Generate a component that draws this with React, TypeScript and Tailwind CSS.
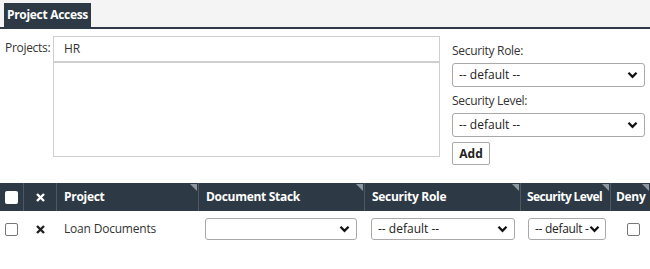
import React from "react";

const Chevron = () => (
  <svg width="11" height="8" viewBox="0 0 11 8" className="shrink-0">
    <path d="M1.5 1.8 L5.5 5.8 L9.5 1.8" fill="none" stroke="#111" strokeWidth="2.3" />
  </svg>
);

const XIcon = () => (
  <svg width="9" height="9" viewBox="0 0 9 9">
    <path d="M1 1 L8 8 M8 1 L1 8" stroke="currentColor" strokeWidth="2.4" />
  </svg>
);

const Sel = ({ text, className }: { text: string; className: string }) => (
  <div
    className={`flex items-center justify-between border border-[#a9a9a9] rounded-[3px] bg-white pl-[6px] pr-[6px] text-[12px] text-[#222] whitespace-nowrap ${className}`}
  >
    <span>{text}</span>
    <Chevron />
  </div>
);

const Tri = () => (
  <div className="absolute top-[1px] right-[1px] w-0 h-0 border-l-[7px] border-l-transparent border-t-[7px] border-t-[#8d969e]" />
);

const Th = ({ w, children, tri = true, last = false }: { w: string; children?: React.ReactNode; tri?: boolean; last?: boolean }) => (
  <div className={`relative h-full flex items-center ${w} ${last ? "" : "border-r border-[#4d5862]"}`}>
    {children}
    {tri && <Tri />}
  </div>
);

export default function App() {
  return (
    <div className="w-[650px] h-[269px] bg-white text-[#333] overflow-hidden" style={{ fontFamily: '"Open Sans", "Noto Sans", sans-serif' }}>
      <div className="h-[27px] bg-[#f4f4f4] flex items-end pl-[4px]">
        <div className="h-[24px] w-[87px] bg-[#2d3a45] text-white text-[12px] font-bold tracking-[-0.3px] flex items-center justify-center">
          Project Access
        </div>
      </div>
      <div className="h-[2px] bg-[#2d3a45]" />
      <div className="flex pt-[7px]">
        <div className="w-[53px] pl-[5px] pt-[3px] text-[12px] tracking-[-0.3px]">Projects:</div>
        <div className="w-[387px] h-[121px] border border-[#cfcfcf]">
          <div className="h-[26px] border-b-2 border-[#cfcfcf] pl-[10px] flex items-center text-[12px]">HR</div>
        </div>
        <div className="ml-[12px] w-[193px] flex flex-col pt-[5px]">
          <div className="text-[12px] tracking-[-0.3px] h-[20px] leading-[20px] mb-[2px]">Security Role:</div>
          <Sel text="-- default --" className="h-[24px]" />
          <div className="text-[12px] tracking-[-0.3px] h-[20px] leading-[20px] mt-[4px] mb-[2px]">Security Level:</div>
          <Sel text="-- default --" className="h-[24px]" />
          <div className="mt-[5px] w-[38px] h-[23px] border border-[#a9a9a9] rounded-[2px] flex items-center justify-center text-[12px] font-bold text-[#222]">
            Add
          </div>
        </div>
      </div>
      <div className="mt-[18px] h-[28px] bg-[#2d3a45] text-white text-[12px] font-bold tracking-[-0.3px] flex">
        <Th w="w-[24px]" tri={false}>
          <div className="ml-[5px] w-[13px] h-[13px] bg-white rounded-[2px]" />
        </Th>
        <Th w="w-[33px]" tri={false}>
          <div className="ml-[12px] text-white"><XIcon /></div>
        </Th>
        <Th w="w-[142px] pl-[7px]">Project</Th>
        <Th w="w-[166px] pl-[7px]">Document Stack</Th>
        <Th w="w-[156px] pl-[7px]">Security Role</Th>
        <Th w="w-[90px] pl-[6px] tracking-[-0.6px]">Security Level</Th>
        <Th w="flex-1 pl-[5px]" last>Deny</Th>
      </div>
      <div className="h-[36px] flex items-center text-[12px]">
        <div className="w-[24px] flex items-center">
          <div className="ml-[5px] w-[13px] h-[13px] border border-[#777] rounded-[2px] bg-white" />
        </div>
        <div className="w-[33px] flex items-center text-[#222]">
          <div className="ml-[12px]"><XIcon /></div>
        </div>
        <div className="w-[142px] pl-[7px] tracking-[-0.2px]">Loan Documents</div>
        <div className="w-[166px] pl-[6px]">
          <Sel text="" className="w-[152px] h-[22px]" />
        </div>
        <div className="w-[156px] pl-[6px]">
          <Sel text="-- default --" className="w-[144px] h-[22px]" />
        </div>
        <div className="w-[90px] pl-[7px]">
          <Sel text="-- default -" className="w-[78px] h-[22px] pl-[5px] pr-[4px] tracking-[-0.3px]" />
        </div>
        <div className="flex-1 flex items-center">
          <div className="ml-[16px] w-[13px] h-[13px] border border-[#777] rounded-[2px] bg-white" />
        </div>
      </div>
    </div>
  );
}
